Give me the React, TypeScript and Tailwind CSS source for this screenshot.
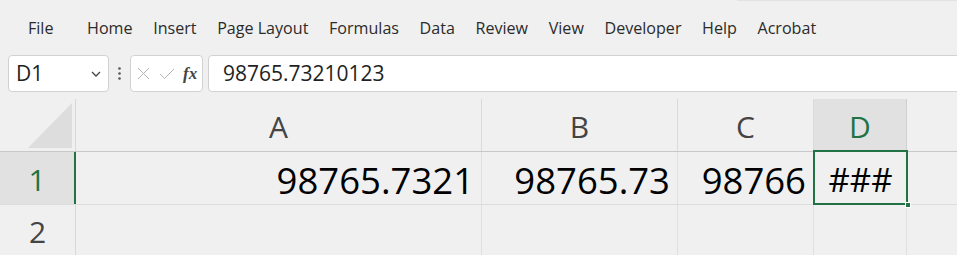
import React from "react";

const menu = ["Home", "Insert", "Page Layout", "Formulas", "Data", "Review", "View", "Developer", "Help", "Acrobat"];

const cols = [
  { name: "A", w: "w-[406px]", value: "98765.7321" },
  { name: "B", w: "w-[196px]", value: "98765.73" },
  { name: "C", w: "w-[136px]", value: "98766" },
];

export default function App() {
  return (
    <div className="w-[957px] h-[255px] overflow-hidden bg-[#f0f0f0] font-['Open_Sans','Noto_Sans',sans-serif] text-[#262626]">
      {/* ribbon tabs */}
      <div className="ml-[737px] h-px bg-[#e2e2e2]" />
      <div className="h-[54px] flex items-center pl-[28px] gap-[20.6px] text-[16.1px] text-[#2b2b2b]">
        <span className="mr-[13px]">File</span>
        {menu.map((m) => (
          <span key={m}>{m}</span>
        ))}
      </div>

      {/* formula bar */}
      <div className="h-[37px] flex items-stretch pl-[8px]">
        <div className="w-[101px] bg-white border border-[#d2d2d2] rounded-[4px] flex items-center pl-[7px] pr-[7px] justify-between">
          <span className="text-[21px] text-[#1f1f1f]">D1</span>
          <svg width="10" height="6" viewBox="0 0 10 6" className="mt-[1px]">
            <path d="M1 1 L5 5 L9 1" fill="none" stroke="#444" strokeWidth="1.3" />
          </svg>
        </div>
        <div className="w-[21px] flex items-center justify-center">
          <svg width="3" height="13" viewBox="0 0 3 13">
            <circle cx="1.5" cy="1.5" r="1.3" fill="#555" />
            <circle cx="1.5" cy="6.5" r="1.3" fill="#555" />
            <circle cx="1.5" cy="11.5" r="1.3" fill="#555" />
          </svg>
        </div>
        <div className="w-[73px] bg-white border border-[#d2d2d2] rounded-[4px] flex items-center pl-[6px] gap-[9px]">
          <svg width="13" height="13" viewBox="0 0 13 13">
            <path d="M1 1 L12 12 M12 1 L1 12" stroke="#b4b4b4" strokeWidth="1" />
          </svg>
          <svg width="16" height="12" viewBox="0 0 16 12">
            <path d="M1 6 L5.5 10.5 L15 1" fill="none" stroke="#b4b4b4" strokeWidth="1" />
          </svg>
          <span className="font-['Liberation_Serif',serif] italic font-bold text-[17px] text-[#444] leading-none -ml-[1px]">fx</span>
        </div>
        <div className="flex-1 ml-[5px] -mr-[6px] bg-white border border-[#d2d2d2] rounded-l-[4px] flex items-center pl-[14px]">
          <span className="text-[21px] text-[#1f1f1f]">98765.73210123</span>
        </div>
      </div>

      {/* grid */}
      <div className="mt-[7px]">
        <div className="h-[53px] flex border-b border-[#c8c8c8]">
          <div className="w-[76px] border-r border-[#d8d8d8] shrink-0">
            <svg width="75" height="52" viewBox="0 0 75 52">
              <polygon points="72,4 72,49 28,49" fill="#dddddd" />
            </svg>
          </div>
          {cols.map((c) => (
            <div
              key={c.name}
              className={`${c.w} shrink-0 border-r border-[#dadada] flex items-center justify-center pt-[3px] text-[30px] text-[#444]`}
            >
              {c.name}
            </div>
          ))}
          <div className="w-[93px] shrink-0 border-r border-[#cfcfcf] bg-[#e1e1e1] flex items-center justify-center pt-[3px] text-[30px] text-[#217346]">
            D
          </div>
          <div className="flex-1" />
        </div>

        <div className="h-[53px] flex border-b border-[#dcdcdc]">
          <div className="w-[76px] shrink-0 bg-[#e1e1e1] border-r-2 border-[#217346] flex items-center justify-center pt-[3px] text-[30px] text-[#217346]">
            1
          </div>
          {cols.map((c) => (
            <div
              key={c.name}
              className={`${c.w} shrink-0 border-r border-[#e0e0e0] flex items-center justify-end pr-[7px] pt-[4px] text-[36.5px] text-black`}
            >
              {c.value}
            </div>
          ))}
          <div className="w-[93px] shrink-0 relative flex items-center justify-center pt-[4px] text-[33px] text-black">
            ###
            <div className="absolute -top-[2px] -left-[1px] -right-[1px] -bottom-[1px] border-2 border-[#217346]" />
            <div className="absolute -right-[4px] -bottom-[4px] w-[6px] h-[6px] bg-[#217346] border border-white" />
          </div>
          <div className="flex-1" />
        </div>

        <div className="h-[50px] flex">
          <div className="w-[76px] shrink-0 border-r border-[#d8d8d8] flex items-center justify-center pt-[3px] text-[30px] text-[#444]">
            2
          </div>
          {cols.map((c) => (
            <div key={c.name} className={`${c.w} shrink-0 border-r border-[#e0e0e0]`} />
          ))}
          <div className="w-[93px] shrink-0 border-r border-[#e0e0e0]" />
          <div className="flex-1" />
        </div>
      </div>
    </div>
  );
}
